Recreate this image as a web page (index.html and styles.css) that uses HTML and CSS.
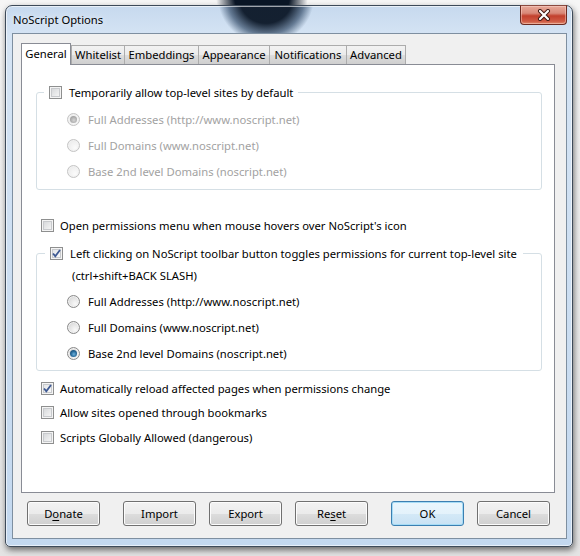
FILE: index.html
```html
<!DOCTYPE html>
<html>
<head>
<meta charset="utf-8">
<title>NoScript Options</title>
<link rel="stylesheet" href="styles.css">
</head>
<body>
<div class="window">
  <div class="titlebar">
    <span class="title">NoScript Options</span>
    <div class="close">
      <svg width="16" height="12" viewBox="0 0 16 12"><path d="M4 2 L12 10 M12 2 L4 10" stroke="#3b1510" stroke-width="4" stroke-linecap="round"/><path d="M4 2 L12 10 M12 2 L4 10" stroke="#ffffff" stroke-width="2.2" stroke-linecap="round"/></svg>
    </div>
  </div>
  <div class="client">
    <div class="tabs">
      <div class="tab sel t-general">General</div>
      <div class="tab t-white">Whitelist</div>
      <div class="tab t-emb">Embeddings</div>
      <div class="tab t-app">Appearance</div>
      <div class="tab t-not">Notifications</div>
      <div class="tab t-adv">Advanced</div>
    </div>
    <div class="panel">
      <div class="group g1">
        <div class="caption"><span class="cb"></span><span>Temporarily allow top-level sites by default</span></div>
        <div class="rrow dis"><span class="radio on"></span>Full Addresses (http://www.noscript.net)</div>
        <div class="rrow dis"><span class="radio"></span>Full Domains (www.noscript.net)</div>
        <div class="rrow dis"><span class="radio"></span>Base 2nd level Domains (noscript.net)</div>
      </div>
      <div class="crow r-open"><span class="cb"></span>Open permissions menu when mouse hovers over NoScript's icon</div>
      <div class="group g2">
        <div class="caption"><span class="cb checked"><svg width="11" height="11" viewBox="0 0 11 11"><path d="M2 5.5 L4.3 8.2 L9 2" fill="none" stroke="#3f5a93" stroke-width="1.8"/></svg></span><span>Left clicking on NoScript toolbar button toggles permissions for current top-level site</span></div>
        <div class="hint">(ctrl+shift+BACK SLASH)</div>
        <div class="rrow"><span class="radio"></span>Full Addresses (http://www.noscript.net)</div>
        <div class="rrow"><span class="radio"></span>Full Domains (www.noscript.net)</div>
        <div class="rrow"><span class="radio on"></span>Base 2nd level Domains (noscript.net)</div>
      </div>
      <div class="crow r-auto"><span class="cb checked"><svg width="11" height="11" viewBox="0 0 11 11"><path d="M2 5.5 L4.3 8.2 L9 2" fill="none" stroke="#3f5a93" stroke-width="1.8"/></svg></span>Automatically reload affected pages when permissions change</div>
      <div class="crow r-book"><span class="cb"></span>Allow sites opened through bookmarks</div>
      <div class="crow r-glob"><span class="cb"></span>Scripts Globally Allowed (dangerous)</div>
    </div>
    <div class="buttons">
      <div class="btn b-donate">D<u>o</u>nate</div>
      <div class="btn b-import">Import</div>
      <div class="btn b-export">Export</div>
      <div class="btn b-reset">Re<u>s</u>et</div>
      <div class="btn b-ok default">OK</div>
      <div class="btn b-cancel">Cancel</div>
    </div>
  </div>
</div>
</body>
</html>
```

FILE: styles.css
```css
* { box-sizing: border-box; }

html, body {
  margin: 0;
  padding: 0;
}

body {
  width: 580px;
  height: 556px;
  overflow: hidden;
  font-family: "Segoe UI", "Noto Sans", "Open Sans", sans-serif;
  font-size: 11.25px;
  color: #000;
  background:
    radial-gradient(ellipse 46px 44px at 262px -4px, rgba(10,22,38,1) 60%, rgba(10,22,38,0) 100%),
    linear-gradient(to bottom, #f6f6f6 0, #e4e4e4 100%);
  padding: 5px 0 0 5px;
}

.window {
  width: 568px;
  height: 542px;
  border: 1px solid #3d4a59;
  border-radius: 7px 7px 5px 5px;
  background:
    radial-gradient(ellipse 48px 46px at 260px -8px, rgba(10,22,38,0.95) 55%, rgba(30,55,85,0.6) 80%, rgba(60,95,130,0) 100%),
    linear-gradient(to bottom, #c6d9ee 0, #d5e4f4 30px, #c3d8ef 100%);
  box-shadow: 1px 3px 6px rgba(0,0,0,0.55), inset 0 0 0 1px rgba(255,255,255,0.6);
  display: flex;
  flex-direction: column;
}

.titlebar {
  height: 27px;
  display: flex;
  align-items: flex-start;
}

.title {
  margin: 6px 0 0 7px;
  font-size: 11.25px;
  color: #000;
  text-shadow: 0 0 6px rgba(255,255,255,0.9);
}

.close {
  margin-left: auto;
  margin-right: 5px;
  margin-top: -1px;
  width: 47px;
  height: 20px;
  border: 1px solid #6b2b22;
  border-top-color: #8a4a40;
  border-radius: 0 0 4px 4px;
  background: linear-gradient(to bottom, #e8a999 0, #d88878 40%, #c2402d 55%, #cf5b45 85%, #e08c6f 100%);
  box-shadow: inset 0 0 0 1px rgba(255,220,210,0.45);
  display: flex;
  align-items: center;
  justify-content: center;
}

.client {
  margin: 0 5px 7px 6px;
  flex: 1;
  border: 1px solid #7e8fa0;
  background: #f0f0f0;
  padding: 9px 0 0 8px;
  display: flex;
  flex-direction: column;
}

/* tabs */
.tabs {
  display: flex;
  align-items: flex-end;
  height: 21px;
  position: relative;
  z-index: 2;
}

.tab {
  height: 19px;
  border: 1px solid #acacac;
  border-bottom: none;
  background: linear-gradient(to bottom, #f2f2f2 0, #ebebeb 50%, #dddddd 51%, #cfcfcf 100%);
  text-align: center;
  line-height: 17px;
  margin-left: -1px;
  white-space: nowrap;
}

.tab.sel {
  height: 22px;
  margin-bottom: -1px;
  border-color: #898c95;
  background: #fff;
  margin-left: 0;
  line-height: 19px;
}

.t-general { width: 50px; }
.t-white { width: 54px; margin-left: 0; }
.t-emb { width: 75px; }
.t-app { width: 72px; }
.t-not { width: 78px; }
.t-adv { width: 60px; }

.panel {
  width: 534px;
  height: 429px;
  border: 1px solid #898c95;
  background: #fff;
  display: flex;
  flex-direction: column;
}

/* group boxes */
.group {
  margin: 0 12px 0 14px;
  border: 1px solid #d5dfe5;
  border-radius: 3px;
  display: flex;
  flex-direction: column;
}

.g1 {
  margin-top: 27px;
  height: 98px;
  padding-left: 30px;
}

.g2 {
  margin-top: 15px;
  height: 118px;
  padding-left: 30px;
}

.caption {
  align-self: flex-start;
  margin: -10px 0 0 -23px;
  padding: 0 5px;
  height: 18px;
  background: #fff;
  display: flex;
  align-items: center;
  gap: 7px;
  white-space: nowrap;
}

.g2 .caption { margin-left: -22px; padding-right: 6px; }

.g1 .caption { margin-bottom: 5px; }

.rrow {
  height: 26px;
  display: flex;
  align-items: center;
  gap: 8px;
}

.rrow.dis { color: #a2a2a2; }

.hint {
  height: 26px;
  display: flex;
  align-items: center;
  padding-left: 5px;
}

.crow {
  display: flex;
  align-items: center;
  gap: 6px;
  margin-left: 19px;
  height: 24px;
}

.r-open { margin-top: 22px; height: 26px; }
.r-auto { margin-top: 5px; }
.r-book { height: 25px; }

/* checkbox */
.cb {
  width: 13px;
  height: 13px;
  flex: none;
  border: 1px solid #8e8f8f;
  background: linear-gradient(135deg, #cfd1d4 0, #e6e7e8 50%, #fbfbfb 100%);
  box-shadow: inset 0 0 0 1px #f4f4f4, inset 0 0 0 2px #c8cacd;
  display: flex;
  align-items: center;
  justify-content: center;
}

.cb.checked {
  background: linear-gradient(135deg, #dfe1e4 0, #eeeff0 50%, #fdfdfd 100%);
}

/* radio */
.radio {
  width: 13px;
  height: 13px;
  flex: none;
  border-radius: 50%;
  border: 1px solid #8a8a8a;
  background: radial-gradient(circle at 65% 70%, #f9f9f9 0, #e2e2e2 55%, #c6c6c6 100%);
  box-shadow: inset 0 0 0 1px #f2f2f2;
  display: flex;
  align-items: center;
  justify-content: center;
}

.radio.on::after {
  content: "";
  width: 7px;
  height: 7px;
  border-radius: 50%;
  background: radial-gradient(circle at 55% 60%, #6fb2dc 0, #2a6d9e 45%, #0f3a5e 100%);
}

.dis .radio {
  border-color: #c4c4c4;
  background: radial-gradient(circle at 65% 70%, #fbfbfb 0, #f0f0f0 55%, #e4e4e4 100%);
}

.dis .radio.on::after {
  background: radial-gradient(circle at 55% 60%, #d4d4d4 0, #a9a9a9 60%, #8e8e8e 100%);
}

/* buttons */
.buttons {
  display: flex;
  margin-top: 8px;
  margin-left: -8px;
}

.btn {
  width: 73px;
  height: 25px;
  border: 1px solid #707070;
  border-radius: 3px;
  background: linear-gradient(to bottom, #f2f2f2 0, #ebebeb 50%, #dddddd 51%, #cfcfcf 100%);
  box-shadow: inset 0 0 0 1px #fcfcfc;
  display: flex;
  align-items: center;
  justify-content: center;
}

.btn u { text-decoration-thickness: 1px; text-underline-offset: 2px; }

.btn.default {
  border-color: #3c7fb1;
  background: linear-gradient(to bottom, #eaf6fd 0, #e4f2fb 50%, #d4e9f7 51%, #c9e2f4 100%);
  box-shadow: inset 0 0 0 1px #a6dcf6;
}

.b-donate { margin-left: 14px; }
.b-import { margin-left: 23px; }
.b-export { margin-left: 13px; }
.b-reset { margin-left: 13px; }
.b-ok { margin-left: 23px; }
.b-cancel { margin-left: 13px; }
```
